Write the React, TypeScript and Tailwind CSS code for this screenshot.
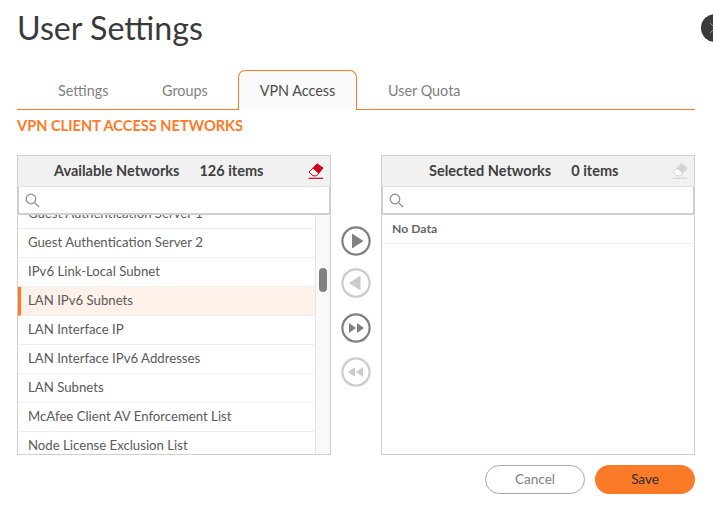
import React from "react";

const font = { fontFamily: 'Lato, "Open Sans", sans-serif' };

function Eraser({ color, line }: { color: string; line: string }) {
  return (
    <svg width="16" height="17" viewBox="0 0 16 17" className="block">
      <path d="M9 0.8 L15 5 L8.6 12.8 H5 L1 9 Z" fill="#fff" stroke={color} strokeWidth="1" />
      <path d="M9 0.8 L15 5 L10.6 10.4 L4.6 5.4 Z" fill={color} />
      <rect x="0.5" y="14.7" width="14.5" height="1.2" fill={line} />
    </svg>
  );
}

function Search() {
  return (
    <svg width="15" height="15" viewBox="0 0 15 15" fill="none" stroke="#8a8a8a" strokeWidth="1.2" className="block">
      <circle cx="6" cy="6" r="4.8" />
      <path d="M9.6 9.6 L14 14" />
    </svg>
  );
}

function RoundBtn({ kind, active }: { kind: "r" | "l" | "rr" | "ll"; active: boolean }) {
  const c = active ? "#808080" : "#cbcbcb";
  return (
    <svg width="30" height="30" viewBox="0 0 30 30" className="block">
      <circle cx="15" cy="15" r="13.6" fill="#fff" stroke={c} strokeWidth="2.2" />
      {kind === "r" && <path d="M11 7.5 L22.5 15 L11 22.5 Z" fill={c} />}
      {kind === "l" && <path d="M19.5 7.5 L8 15 L19.5 22.5 Z" fill={c} />}
      {kind === "rr" && <path d="M8 10 L15 15 L8 20 Z M16 10 L23 15 L16 20 Z" fill={c} />}
      {kind === "ll" && <path d="M14 10 L7 15 L14 20 Z M22 10 L15 15 L22 20 Z" fill={c} />}
    </svg>
  );
}

const rows = [
  "Guest Authentication Server 1",
  "Guest Authentication Server 2",
  "IPv6 Link-Local Subnet",
  "LAN IPv6 Subnets",
  "LAN Interface IP",
  "LAN Interface IPv6 Addresses",
  "LAN Subnets",
  "McAfee Client AV Enforcement List",
  "Node License Exclusion List",
];

function PanelHead({ title, count, eraser, pl }: { title: string; count: string; eraser: React.ReactNode; pl: string }) {
  return (
    <>
      <div className="h-[30px] shrink-0 bg-[#f1f1f1] flex items-center relative pb-px text-[14.5px] font-bold text-[#3f3f3f]">
        <span className={pl}>{title}</span>
        <span className="ml-5">{count}</span>
        <span className="absolute right-[6px] top-[7px]">{eraser}</span>
      </div>
      <div className="h-[29px] shrink-0 -mx-px bg-white border-2 border-t border-x-[#cfcfcf] border-t-[#e2e2e2] border-b-[#cfcfcf] rounded-[3px] flex items-center pl-[6px]">
        <Search />
      </div>
    </>
  );
}

export default function App() {
  return (
    <div className="w-[713px] h-[508px] bg-white overflow-hidden relative" style={font}>
      <div className="absolute left-[701px] top-[14px] w-[28px] h-[28px] rounded-full bg-[#3b3b3b] flex items-center justify-center">
        <svg width="28" height="28" viewBox="0 0 28 28" className="block" stroke="#9a9a9a" strokeWidth="1">
          <path d="M9 9 L19 19 M19 9 L9 19" />
        </svg>
      </div>

      <div className="pl-[17px] pr-[18px]">
        <h1 className="h-[70px] pt-[9px] text-[32.2px] leading-[38px] text-[#3a3a3a] font-normal">User Settings</h1>

        <div className="h-[40px] flex border-b border-[#ff7a26] text-[14.4px] text-[#7f7f7f]">
          <div className="w-[133px] pl-[41px] pt-[10px]">Settings</div>
          <div className="w-[88px] pl-[12px] pt-[10px]">Groups</div>
          <div className="w-[119px] h-[40px] bg-[#fafafa] border border-b-0 border-[#ff7a26] rounded-t-[7px] text-center pt-[9px] text-[#4a4a4a] relative">
            VPN Access
          </div>
          <div className="pl-[31px] pt-[10px]">User Quota</div>
        </div>

        <div className="mt-[7px] h-[18px] text-[14.6px] leading-[18px] font-bold text-[#ff7a26]">VPN CLIENT ACCESS NETWORKS</div>

        <div className="mt-[20px] flex items-start">
          <div className="w-[314px] h-[300px] border border-[#cfcfcf] flex flex-col">
            <PanelHead title="Available Networks" count="126 items" pl="pl-[36px]" eraser={<Eraser color="#d0021b" line="#d0021b" />} />
            <div className="flex-1 flex overflow-hidden">
              <div className="flex-1 overflow-hidden">
                <div className="-mt-[15px]">
                  {rows.map((r) => {
                    const sel = r === "LAN IPv6 Subnets";
                    return (
                      <div
                        key={r}
                        className={
                          "h-[29px] shrink-0 flex items-center pb-px text-[13.2px] text-[#5a5a5a] border-b border-[#eeeeee] " +
                          (sel ? "bg-[#fdf1ea] border-l-[3px] border-l-[#ff7a26] pl-[7px]" : "pl-[10px]")
                        }
                      >
                        {r}
                      </div>
                    );
                  })}
                </div>
              </div>
              <div className="w-[15px] bg-[#f9f9f9] border-l border-[#e6e6e6] pl-[3px] pt-[53px]">
                <div className="w-[8px] h-[24px] rounded-full bg-[#808080]" />
              </div>
            </div>
          </div>

          <div className="w-[50px] pt-[71px] flex flex-col items-center">
            <RoundBtn kind="r" active />
            <div className="mt-[12px]"><RoundBtn kind="l" active={false} /></div>
            <div className="mt-[15px]"><RoundBtn kind="rr" active /></div>
            <div className="mt-[14px]"><RoundBtn kind="ll" active={false} /></div>
          </div>

          <div className="w-[314px] h-[300px] border border-[#cfcfcf] flex flex-col">
            <PanelHead title="Selected Networks" count="0 items" pl="pl-[47px]" eraser={<Eraser color="#d4d4d4" line="#d4d4d4" />} />
            <div className="h-[29px] flex items-center pl-[10px] pt-px text-[12.2px] font-bold text-[#666666] border-b border-[#f0f0f0]">No Data</div>
          </div>
        </div>

        <div className="mt-[10px] flex justify-end gap-[10px] text-[13.5px]">
          <button className="w-[100px] h-[29px] rounded-full border border-[#a8a8a8] bg-white text-[#7f7f7f]">Cancel</button>
          <button className="w-[100px] h-[29px] rounded-full bg-[#fb7a27] text-[#2a2a2a]">Save</button>
        </div>
      </div>
    </div>
  );
}
